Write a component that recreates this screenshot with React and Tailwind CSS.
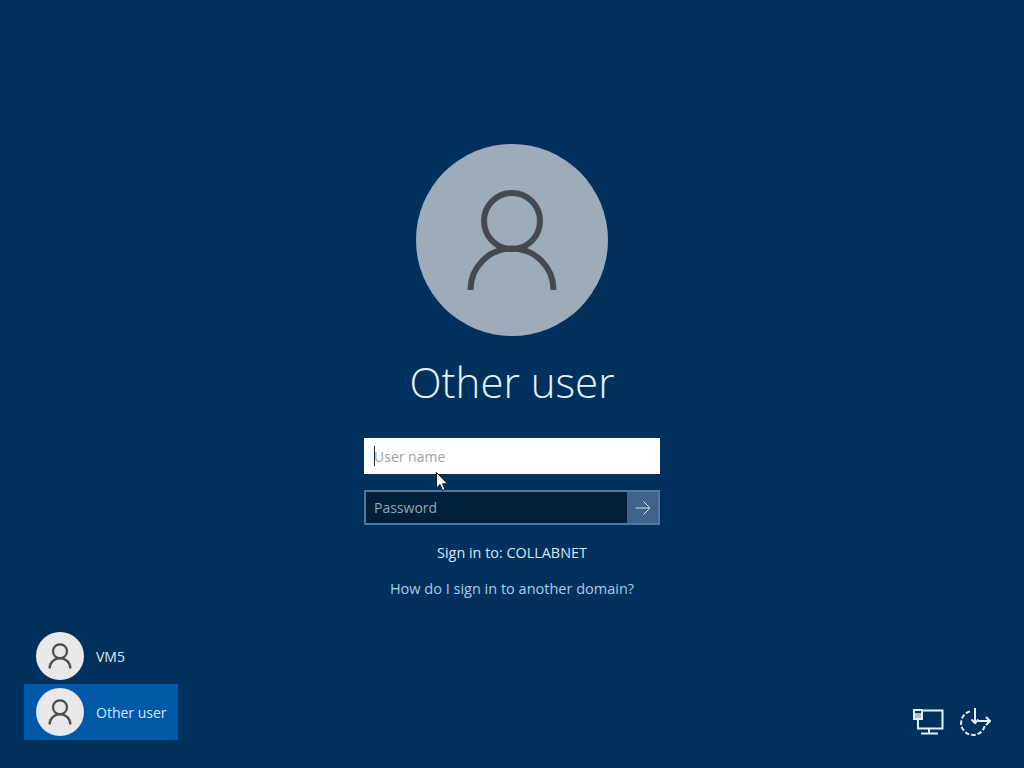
import React from 'react'

function UserGlyph({ className, strokeWidth }) {
  return (
    <svg className={className} viewBox="0 0 192 192" fill="none" stroke="currentColor" strokeWidth={strokeWidth}>
      <circle cx="96" cy="77" r="28" />
      <path d="M54.5 146A41.5 41.5 0 0 1 137.5 146" />
    </svg>
  )
}

function Tile({ name, active }) {
  return (
    <div className={`flex items-center h-14 pl-3 gap-3 ${active ? 'bg-[#0058a8] text-[#d7ecfb]' : 'text-[#dfeaf5]'}`}>
      <div className="w-12 h-12 shrink-0 rounded-full bg-[#e8e8e8] text-[#4a4a4a]">
        <UserGlyph className="w-12 h-12" strokeWidth={9} />
      </div>
      <span className="pt-px text-sm whitespace-nowrap">{name}</span>
    </div>
  )
}

export default function App() {
  return (
    <div className="relative flex flex-col w-[1024px] h-[768px] overflow-hidden bg-[#00305c] text-white font-['Open_Sans','Noto_Sans',sans-serif]">
      <main className="flex flex-col items-center pt-[144px]">
        <div className="w-48 h-48 rounded-full bg-[#9eacba] text-[#464a4f]">
          <UserGlyph className="w-48 h-48" strokeWidth={6} />
        </div>
        <h1 className="mt-[19px] text-[42px] leading-[54px] font-light text-[#e6f5fd]">Other user</h1>
        <div className="mt-[29px] flex items-center w-[296px] h-9 bg-white pl-[10px] text-sm text-[#a3a3a3]">
          <span className="w-px h-5 bg-[#222222]" />
          <span className="-ml-px pt-px">User name</span>
        </div>
        <div className="mt-4 flex w-[296px] h-[35px] border-2 border-[#54799e] bg-[#011f3b]">
          <div className="flex-1 flex items-center pl-2 pt-px text-sm text-[#93a8bc]">Password</div>
          <div className="w-[31px] flex items-center justify-center bg-[#3f6488] text-[#d5e3ef]">
            <svg className="w-4 h-4" viewBox="0 0 16 16" fill="none" stroke="currentColor" strokeWidth="1">
              <path d="M0.5 8H15M8.5 1.5L15 8L8.5 14.5" />
            </svg>
          </div>
        </div>
        <p className="mt-[18px] text-[14.4px] leading-5 text-[#d2ebfa]">Sign in to: COLLABNET</p>
        <p className="mt-4 text-[14.5px] leading-5 text-[#a9cfe9]">How do I sign in to another domain?</p>
      </main>

      <footer className="mt-auto flex items-end justify-between pl-6 pr-[33px] pb-7">
        <div className="flex flex-col w-[154px]">
          <Tile name="VM5" />
          <Tile name="Other user" active />
        </div>
        <div className="flex items-center gap-[15px] pb-[3px] text-[#e2f1fb]">
          <svg className="w-[31px] h-[28px]" viewBox="0 0 31 28" fill="none" stroke="currentColor" strokeWidth="2">
            <path d="M8 3.5H29.5V21.5H5V12" />
            <path d="M16 21.5V26M8 26.5H25" />
            <rect x="1" y="3" width="8" height="9" />
            <rect x="2" y="6" width="6" height="5" fill="currentColor" stroke="none" opacity="0.75" />
          </svg>
          <svg className="w-8 h-8" viewBox="0 0 32 32" fill="none" stroke="currentColor" strokeWidth="2">
            <path d="M11 6.4A12 12 0 1 0 26 19.5" strokeDasharray="4.5 2" />
            <path d="M16 3V18M12.5 14.5L16 18L19.5 14.5" />
            <path d="M19 16H31M27 12L31 16L27 20" />
          </svg>
        </div>
      </footer>

      {/* mouse pointer sits over the fields */}
      <svg className="absolute left-[436px] top-[472px] w-[13px] h-[20px]" viewBox="0 0 13 20">
        <path d="M0.5 0.5V16L4 12.6L6.6 18.6L9 17.5L6.5 11.8H11.5Z" fill="#ffffff" stroke="#0b1f33" strokeWidth="1" />
      </svg>
    </div>
  )
}
